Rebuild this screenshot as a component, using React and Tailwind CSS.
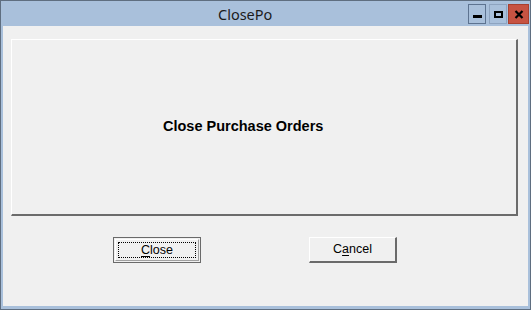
import React from "react";

function TitleButton({ kind }) {
  if (kind === "close") {
    return (
      <div className="w-[21px] h-[20px] bg-[#c75342] border border-[#a8402f] flex items-center justify-center">
        <svg width="10" height="9" viewBox="0 0 10 9">
          <path d="M1.5 1 L8.5 8 M8.5 1 L1.5 8" stroke="#000" strokeWidth="2.2" />
        </svg>
      </div>
    );
  }
  return (
    <div
      className={
        "w-[18px] h-[20px] flex items-center justify-center border " +
        (kind === "min" ? "border-[#5d7390]" : "border-[#8ea4c0]")
      }
    >
      {kind === "min" ? (
        <div className="w-[9px] h-[3px] bg-black mt-[4px]" />
      ) : (
        <div className="w-[9px] h-[7px] border-2 border-black" />
      )}
    </div>
  );
}

function Underlined({ before, letter, after }) {
  return (
    <span>
      {before}
      <span className="underline underline-offset-2">{letter}</span>
      {after}
    </span>
  );
}

export default function App() {
  return (
    <div
      className="w-[531px] h-[310px] bg-[#a9c0db] border border-[#5f6e80] flex flex-col"
      style={{ fontFamily: '"Liberation Sans", Arial, sans-serif' }}
    >
      {/* title bar */}
      <div className="h-[25px] flex items-start">
        <div
          className="flex-1 pl-[217px] pt-[3px] text-[14.5px] text-[#1b1b1b]"
          style={{ fontFamily: '"Noto Sans", "Open Sans", sans-serif' }}
        >
          ClosePo
        </div>
        <div className="flex pt-[3px] pr-[1px]">
          <TitleButton kind="min" />
          <div className="w-[3px]" />
          <TitleButton kind="max" />
          <div className="w-[1px]" />
          <TitleButton kind="close" />
        </div>
      </div>

      {/* client area */}
      <div className="flex-1 mx-[2px] mb-[3px] bg-[#f0f0f0] flex flex-col pt-[13px] pl-[8px] pr-[10px]">
        <div className="h-[177px] border-t border-l border-white border-r-2 border-b-2 border-r-[#6b6b6b] border-b-[#6b6b6b] flex items-center pl-[151px]">
          <span className="text-[14.5px] font-bold text-black">Close Purchase Orders</span>
        </div>

        <div className="flex pt-[21px] pl-[102px] gap-[108px] text-[12.5px] text-black">
          <button className="w-[88px] h-[26px] border border-[#6a6a6a] p-[1px] bg-[#f0f0f0]">
            <div className="w-full h-full border-t border-l border-white border-r border-b border-r-[#a0a0a0] border-b-[#a0a0a0] p-[2px]">
              <div className="w-full h-full border border-dotted border-black flex items-center justify-center">
                <Underlined before="" letter="C" after="lose" />
              </div>
            </div>
          </button>
          <button className="w-[88px] h-[26px] border-t border-l border-white border-r-2 border-b-2 border-r-[#6a6a6a] border-b-[#6a6a6a] bg-[#f0f0f0] flex items-center justify-center">
            <Underlined before="C" letter="a" after="ncel" />
          </button>
        </div>
      </div>
    </div>
  );
}
